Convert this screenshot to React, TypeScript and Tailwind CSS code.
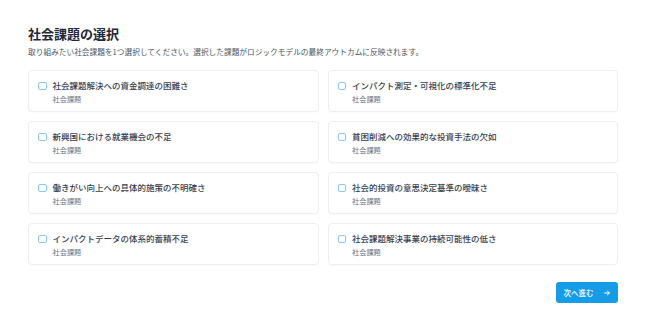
const issues = [
  "社会課題解決への資金調達の困難さ",
  "インパクト測定・可視化の標準化不足",
  "新興国における就業機会の不足",
  "貧困削減への効果的な投資手法の欠如",
  "働きがい向上への具体的施策の不明確さ",
  "社会的投資の意思決定基準の曖昧さ",
  "インパクトデータの体系的蓄積不足",
  "社会課題解決事業の持続可能性の低さ",
];

export default function App() {
  return (
    <main
      className="min-h-[335px] w-[650px] bg-white pl-[28px] pr-[32px] pt-[25px] text-[#1f2937]"
      style={{ fontFamily: '"Noto Sans CJK JP", "Noto Sans", sans-serif' }}
    >
      <h1 className="text-[13px] font-bold leading-[18px] text-[#1f2937]">社会課題の選択</h1>
      <p className="mt-[3px] text-[7.7px] leading-[11px] text-[#4b5563]">
        取り組みたい社会課題を1つ選択してください。選択した課題がロジックモデルの最終アウトカムに反映されます。
      </p>

      <div className="mt-[13px] grid grid-cols-2 gap-x-[9px] gap-y-[9px]">
        {issues.map((label) => (
          <label
            key={label}
            className="flex h-[42px] cursor-pointer items-start gap-[6px] rounded-[4px] border border-[#eceef1] bg-white px-[9px] pt-[9px] shadow-[0_1px_1px_rgba(0,0,0,0.02)]"
          >
            <span className="mt-[1.5px] h-[8.5px] w-[8.5px] shrink-0 rounded-[2px] border border-[#8cc6f2] bg-white" />
            <span className="flex flex-col">
              <span className="text-[8.5px] font-medium leading-[11px] text-[#374151]">{label}</span>
              <span className="mt-[3px] text-[7.2px] leading-[10px] text-[#6b7280]">社会課題</span>
            </span>
          </label>
        ))}
      </div>

      <div className="mt-[17px] flex justify-end">
        <button className="flex h-[21px] w-[62px] items-center justify-center gap-[9px] rounded-[3px] bg-[#169ce6] text-[7.5px] font-medium text-white">
          <span>次へ進む</span>
          <svg width="8" height="8" viewBox="0 0 24 24" fill="none" stroke="currentColor" strokeWidth="3" strokeLinecap="round" strokeLinejoin="round">
            <path d="M5 12h14" />
            <path d="M13 6l6 6-6 6" />
          </svg>
        </button>
      </div>
    </main>
  );
}
